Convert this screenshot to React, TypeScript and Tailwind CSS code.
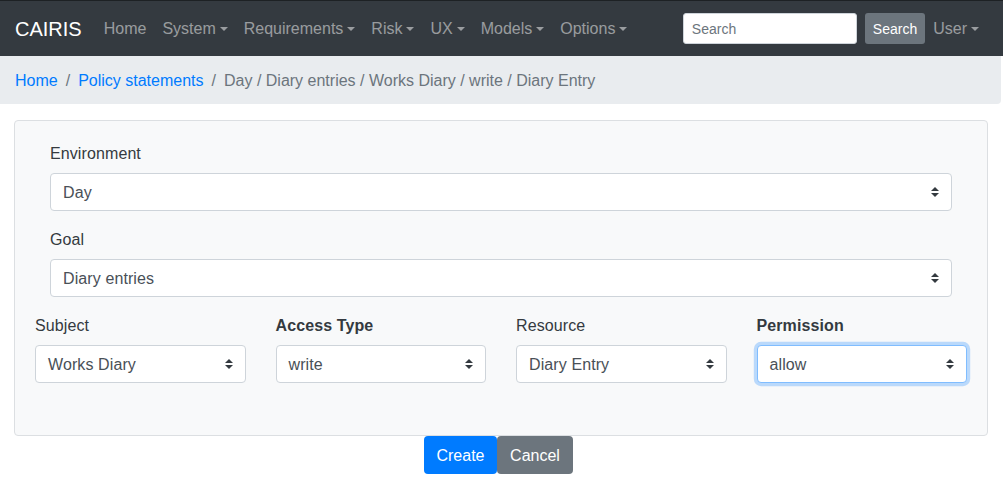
import React from "react";

const Caret = () => (
  <span className="ml-[4px] inline-block h-0 w-0 border-x-[4.8px] border-t-[4.8px] border-x-transparent border-t-current align-[3px]" />
);

const arrow =
  "url(\"data:image/svg+xml,%3csvg xmlns='http://www.w3.org/2000/svg' width='4' height='5' viewBox='0 0 4 5'%3e%3cpath fill='%23343a40' d='M2 0L0 2h4zm0 5L0 3h4z'/%3e%3c/svg%3e\")";

function Select({ value, focused }: { value: string; focused?: boolean }) {
  return (
    <div
      className={
        "flex h-[38px] w-full items-center rounded-[4px] border bg-white pl-[12px] pt-[2px] text-[16px] tracking-[0.1px] text-[#495057] " +
        (focused
          ? "border-[#80bdff] shadow-[0_0_0_3.2px_rgba(0,123,255,0.25)]"
          : "border-[#ced4da]")
      }
      style={{
        backgroundImage: arrow,
        backgroundRepeat: "no-repeat",
        backgroundPosition: "right 12px center",
        backgroundSize: "8px 10px",
      }}
    >
      {value}
    </div>
  );
}

function Label({ children, bold }: { children: React.ReactNode; bold?: boolean }) {
  return (
    <div className={"mb-[7px] pt-[1px] tracking-[0.1px] " + (bold ? "font-bold text-[#343a40]" : "text-[#343a40]")}>
      {children}
    </div>
  );
}

export default function App() {
  const navItems = ["System", "Requirements", "Risk", "UX", "Models", "Options"];
  return (
    <div className="min-h-[488px] bg-white text-[16px] leading-[24px] text-[#212529] [font-family:'Liberation_Sans',Arial,sans-serif]">
      <nav className="flex h-[56px] items-center border-t border-[#1d2124] bg-[#343a40] pl-[15px] pr-[16px]">
        <span className="mr-[14px] text-[20px] leading-[30px] text-white">CAIRIS</span>
        <div className="flex items-center text-[rgba(255,255,255,0.5)]">
          <span className="px-[8px]">Home</span>
          {navItems.map((n) => (
            <span key={n} className="px-[8px]">
              {n}
              <Caret />
            </span>
          ))}
        </div>
        <div className="ml-auto flex items-center">
          <div className="flex h-[31px] w-[174px] items-center rounded-[3px] border border-[#ced4da] bg-white px-[8px] text-[14px] text-[#6c757d]">
            Search
          </div>
          <div className="ml-[8px] flex h-[31px] items-center rounded-[3px] bg-[#6c757d] px-[8px] text-[14px] text-white">
            Search
          </div>
          <span className="px-[8px] text-[rgba(255,255,255,0.5)]">
            User
            <Caret />
          </span>
        </div>
      </nav>
      <div className="mr-[2px] flex h-[48px] items-center rounded-br-[4px] bg-[#e9ecef] px-[15px] pt-[2px]">
        <span className="text-[#007bff]">Home</span>
        <span className="px-[8px] text-[#6c757d]">/</span>
        <span className="text-[#007bff]">Policy statements</span>
        <span className="px-[8px] text-[#6c757d]">/</span>
        <span className="text-[#6c757d]">Day / Diary entries / Works Diary / write / Diary Entry</span>
      </div>
      <div className="ml-[14px] mt-[16px] w-[974px] rounded-[4px] border border-[#dcdfe2] bg-[#f8f9fa] px-[5px] pb-[52px] pt-[20px]">
        <div className="px-[30px]">
          <div className="mb-[16px]">
            <Label>Environment</Label>
            <Select value="Day" />
          </div>
          <div className="mb-[16px]">
            <Label>Goal</Label>
            <Select value="Diary entries" />
          </div>
        </div>
        <div className="grid grid-cols-4">
          <div className="px-[15px]">
            <Label>Subject</Label>
            <Select value="Works Diary" />
          </div>
          <div className="px-[15px]">
            <Label bold>Access Type</Label>
            <Select value="write" />
          </div>
          <div className="px-[15px]">
            <Label>Resource</Label>
            <Select value="Diary Entry" />
          </div>
          <div className="px-[15px]">
            <Label bold>Permission</Label>
            <Select value="allow" focused />
          </div>
        </div>
      </div>
      <div className="flex justify-center pr-[6px]">
        <div className="flex h-[38px] w-[73px] items-center justify-center rounded-[4px] bg-[#007bff] pt-[2px] text-white">
          Create
        </div>
        <div className="flex h-[38px] w-[76px] items-center justify-center rounded-[4px] bg-[#6c757d] pt-[2px] text-white">
          Cancel
        </div>
      </div>
    </div>
  );
}
